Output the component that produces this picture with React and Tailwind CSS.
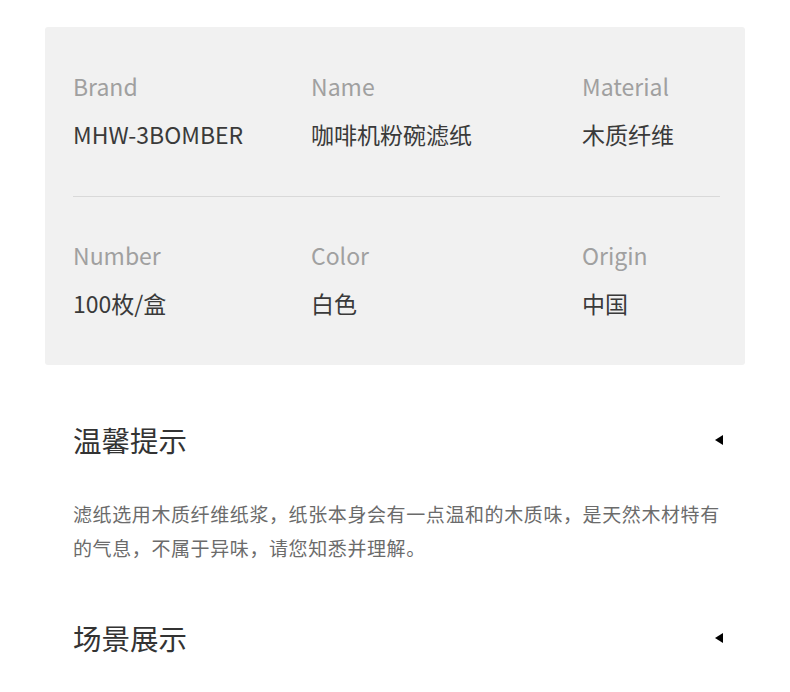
const specs = [
  [
    { label: 'Brand', value: 'MHW-3BOMBER' },
    { label: 'Name', value: '咖啡机粉碗滤纸' },
    { label: 'Material', value: '木质纤维' },
  ],
  [
    { label: 'Number', value: '100枚/盒' },
    { label: 'Color', value: '白色' },
    { label: 'Origin', value: '中国' },
  ],
];

function SpecRow({ items }) {
  return (
    <div className="grid grid-cols-[238px_271px_1fr]">
      {items.map((it) => (
        <div key={it.label}>
          <div className="text-[23px] leading-[30px] text-[#a0a0a0]">{it.label}</div>
          <div className="mt-[18px] text-[23px] leading-[30px] text-[#3a3a3a]">{it.value}</div>
        </div>
      ))}
    </div>
  );
}

function Caret() {
  return (
    <svg width="9" height="10" viewBox="0 0 9 10" className="mr-[-1px]">
      <polygon points="8,0 8,10 0,5" fill="#000" />
    </svg>
  );
}

function SectionTitle({ children }) {
  return (
    <div className="flex items-center justify-between pl-[73px] pr-[67px]">
      <h2 className="text-[28.5px] leading-[40px] text-[#333]">{children}</h2>
      <Caret />
    </div>
  );
}

export default function App() {
  return (
    <div className="min-h-[692px] bg-white pt-[27px] font-['Noto_Sans_CJK_SC','Noto_Sans',sans-serif]">
      <div className="mx-[45px] rounded-[3px] bg-[#f1f1f1] pl-[28px] pr-[25px] pt-[44px] pb-[47px]">
        <SpecRow items={specs[0]} />
        <div className="mt-[47px] mb-[43px] h-px bg-[#d9d9d9]" />
        <SpecRow items={specs[1]} />
      </div>

      <div className="mt-[55px]">
        <SectionTitle>温馨提示</SectionTitle>
      </div>
      <p className="mt-[37px] pl-[73px] pr-[67px] text-[19px] leading-[34px] tracking-[0.6px] text-[#6b6b6b]">
        滤纸选用木质纤维纸浆，纸张本身会有一点温和的木质味，是天然木材特有的气息，不属于异味，请您知悉并理解。
      </p>

      <div className="mt-[53px]">
        <SectionTitle>场景展示</SectionTitle>
      </div>
    </div>
  );
}
